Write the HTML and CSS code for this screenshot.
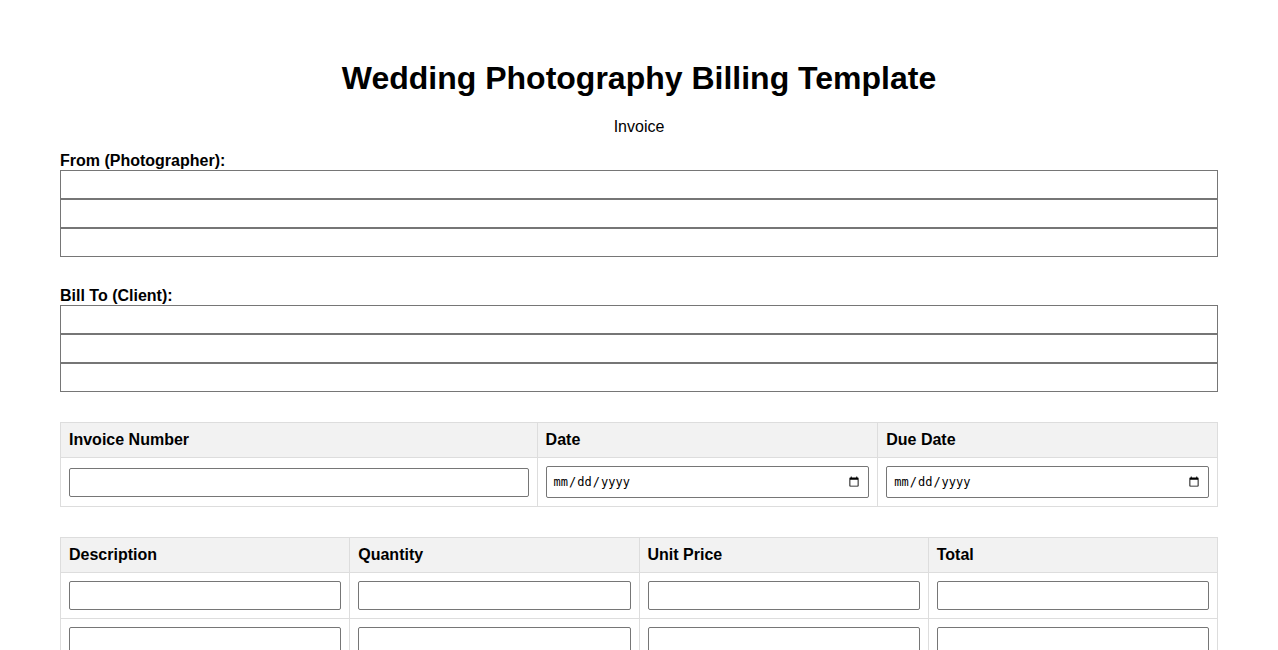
FILE: index.html
```html
<!DOCTYPE html>
<html lang="en">
<head>
<meta charset="utf-8">
<title>Wedding Photography Billing Template</title>
<link rel="stylesheet" href="styles.css">
</head>
<body>
<div class="page">
  <h1 class="title">Wedding Photography Billing Template</h1>
  <p class="subtitle">Invoice</p>

  <div class="group">
    <label class="group-label">From (Photographer):</label>
    <input type="text" class="line">
    <input type="text" class="line">
    <input type="text" class="line">
  </div>

  <div class="group">
    <label class="group-label">Bill To (Client):</label>
    <input type="text" class="line">
    <input type="text" class="line">
    <input type="text" class="line">
  </div>

  <table class="grid meta">
    <thead>
      <tr>
        <th class="c-num">Invoice Number</th>
        <th class="c-date">Date</th>
        <th class="c-due">Due Date</th>
      </tr>
    </thead>
    <tbody>
      <tr>
        <td><input type="text" class="cell-input"></td>
        <td><input type="date" class="cell-input date-input"></td>
        <td><input type="date" class="cell-input date-input"></td>
      </tr>
    </tbody>
  </table>

  <table class="grid items">
    <thead>
      <tr>
        <th>Description</th>
        <th>Quantity</th>
        <th>Unit Price</th>
        <th>Total</th>
      </tr>
    </thead>
    <tbody>
      <tr><td><input type="text" class="cell-input"></td><td><input type="text" class="cell-input"></td><td><input type="text" class="cell-input"></td><td><input type="text" class="cell-input"></td></tr>
      <tr><td><input type="text" class="cell-input"></td><td><input type="text" class="cell-input"></td><td><input type="text" class="cell-input"></td><td><input type="text" class="cell-input"></td></tr>
      <tr><td><input type="text" class="cell-input"></td><td><input type="text" class="cell-input"></td><td><input type="text" class="cell-input"></td><td><input type="text" class="cell-input"></td></tr>
      <tr><td><input type="text" class="cell-input"></td><td><input type="text" class="cell-input"></td><td><input type="text" class="cell-input"></td><td><input type="text" class="cell-input"></td></tr>
    </tbody>
  </table>
</div>
</body>
</html>
```

FILE: styles.css
```css
html, body {
  margin: 0;
  padding: 0;
  background: #ffffff;
}

body {
  font-family: "Liberation Sans", Arial, sans-serif;
  font-size: 16px;
  color: #000;
}

.page {
  padding: 60px 60px 40px;
}

.title {
  margin: 0 0 21px;
  font-size: 32px;
  font-weight: bold;
  text-align: center;
}

.subtitle {
  margin: 0 0 16px;
  text-align: center;
}

.group {
  margin-bottom: 30px;
}

.group-label {
  display: block;
  font-weight: bold;
}

.line {
  display: block;
  width: 100%;
  box-sizing: border-box;
  margin: 0;
  padding: 6px;
  border: 1px solid #767676;
  border-radius: 0;
}

.grid {
  width: 100%;
  border-collapse: collapse;
  table-layout: fixed;
  margin-bottom: 30px;
}

.grid th,
.grid td {
  border: 1px solid #dddddd;
  padding: 8px;
  text-align: left;
}

.grid th {
  background: #f2f2f2;
  font-weight: bold;
}

.meta .c-num {
  width: 41.54%;
}

.meta .c-date {
  width: 29.27%;
}

.meta .c-due {
  width: 29.19%;
}

.cell-input {
  width: 100%;
  box-sizing: border-box;
  margin: 0;
  padding: 6px;
  border: 1px solid #767676;
  border-radius: 2px;
}

.date-input {
  padding: 7px 6px;
  font-size: 12px;
}
```
